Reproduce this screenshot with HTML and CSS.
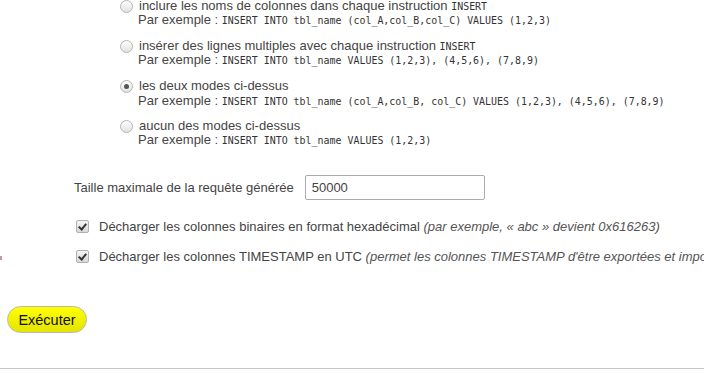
FILE: index.html
```html
<!DOCTYPE html>
<html lang="fr">
<head>
<meta charset="utf-8">
<title>Export</title>
<link rel="stylesheet" href="styles.css">
</head>
<body>
<div class="page">
  <span class="edge-icon"></span>
  <ul class="modes">
    <li class="mode">
      <div class="mode-head"><span class="radio"></span><span class="mode-label">inclure les noms de colonnes dans chaque instruction <code>INSERT</code></span></div>
      <div class="example">Par exemple : <code>INSERT INTO tbl_name (col_A,col_B,col_C) VALUES (1,2,3)</code></div>
    </li>
    <li class="mode">
      <div class="mode-head"><span class="radio"></span><span class="mode-label">insérer des lignes multiples avec chaque instruction <code>INSERT</code></span></div>
      <div class="example">Par exemple : <code>INSERT INTO tbl_name VALUES (1,2,3), (4,5,6), (7,8,9)</code></div>
    </li>
    <li class="mode">
      <div class="mode-head"><span class="radio checked"></span><span class="mode-label">les deux modes ci-dessus</span></div>
      <div class="example">Par exemple : <code>INSERT INTO tbl_name (col_A,col_B, col_C) VALUES (1,2,3), (4,5,6), (7,8,9)</code></div>
    </li>
    <li class="mode">
      <div class="mode-head"><span class="radio"></span><span class="mode-label">aucun des modes ci-dessus</span></div>
      <div class="example">Par exemple : <code>INSERT INTO tbl_name VALUES (1,2,3)</code></div>
    </li>
  </ul>

  <div class="field">
    <label class="field-label">Taille maximale de la requête générée</label>
    <input class="field-input" type="text" value="50000">
  </div>

  <div class="check first">
    <span class="checkbox"></span>
    <span class="check-text">Décharger les colonnes binaires en format hexadécimal <em>(par exemple, « abc » devient 0x616263)</em></span>
  </div>
  <div class="check">
    <span class="checkbox"></span>
    <span class="check-text">Décharger les colonnes TIMESTAMP en UTC <em>(permet les colonnes TIMESTAMP d'être exportées et importées dans des serveurs de fuseaux horaires différents)</em></span>
  </div>

  <div class="actions">
    <button class="run" type="button">Exécuter</button>
  </div>

  <hr class="rule">
</div>
</body>
</html>
```

FILE: styles.css
```css
html, body {
  margin: 0;
  padding: 0;
  background: #fff;
  overflow: hidden;
}

body {
  font-family: "Liberation Sans", Arial, sans-serif;
  font-size: 13px;
  color: #444;
}

.page {
  position: relative;
  width: 704px;
  height: 373px;
  overflow: hidden;
}

.edge-icon {
  position: absolute;
  left: 0;
  top: 256px;
  width: 2px;
  height: 4px;
  background: linear-gradient(90deg, #d04040 50%, #5070d0 50%);
  opacity: 0.6;
}

code {
  font-family: "DejaVu Sans Mono", monospace;
  font-size: 9.95px;
  line-height: 1;
  color: #333;
}

.modes {
  list-style: none;
  margin: -1px 0 0 0;
  padding: 0 0 0 120px;
}

.mode {
  height: 28px;
  margin-bottom: 12px;
}

.mode:nth-child(3) .example {
  margin-top: 1px;
}

.mode-head {
  display: flex;
  align-items: center;
  height: 14px;
  line-height: 14px;
}

.radio {
  flex: none;
  width: 11px;
  height: 11px;
  border: 1px solid #b4b4b4;
  border-radius: 50%;
  background: linear-gradient(#fdfdfd, #e2e2e2);
  margin-right: 6px;
  position: relative;
}

.radio.checked::after {
  content: "";
  position: absolute;
  left: 3px;
  top: 3px;
  width: 5px;
  height: 5px;
  border-radius: 50%;
  background: #555;
}

.mode-label {
  white-space: nowrap;
}

.example {
  height: 14px;
  line-height: 14px;
  padding-left: 18px;
  white-space: nowrap;
}

.field {
  display: flex;
  align-items: center;
  margin-top: 28px;
  padding-left: 74px;
  gap: 11px;
}

.field-label {
  white-space: nowrap;
}

.field-input {
  box-sizing: border-box;
  width: 180px;
  height: 25px;
  border: 1px solid #aaa;
  border-radius: 2px;
  padding: 0 6px;
  font-family: "Liberation Sans", Arial, sans-serif;
  font-size: 13px;
  color: #444;
  margin: 0;
}

.check {
  display: flex;
  align-items: center;
  height: 16px;
  padding-left: 76px;
  margin-top: 14px;
  white-space: nowrap;
}

.check.first {
  margin-top: 18px;
}

.checkbox {
  flex: none;
  box-sizing: border-box;
  width: 13px;
  height: 13px;
  border: 1px solid #b0b0b0;
  border-radius: 2px;
  background: linear-gradient(#f4f4f4, #d8d8d8);
  margin-right: 10px;
  position: relative;
}

.checkbox::after {
  content: "";
  position: absolute;
  left: 3px;
  top: 1px;
  width: 3px;
  height: 6px;
  border: solid #333;
  border-width: 0 2px 2px 0;
  transform: rotate(40deg);
}

.check-text em {
  color: #555;
}

.actions {
  margin-top: 42px;
  padding-left: 7px;
}

.run {
  box-sizing: border-box;
  width: 80px;
  height: 27px;
  border: 1px solid #b8b8b8;
  border-radius: 14px;
  background: linear-gradient(#ffff00, #e4e400);
  font-family: "Liberation Sans", Arial, sans-serif;
  font-size: 14.5px;
  color: #111;
  padding: 0;
  margin: 0;
}

.rule {
  border: 0;
  border-top: 1px solid #c8c8c8;
  margin: 35px 0 0 0;
}
```
